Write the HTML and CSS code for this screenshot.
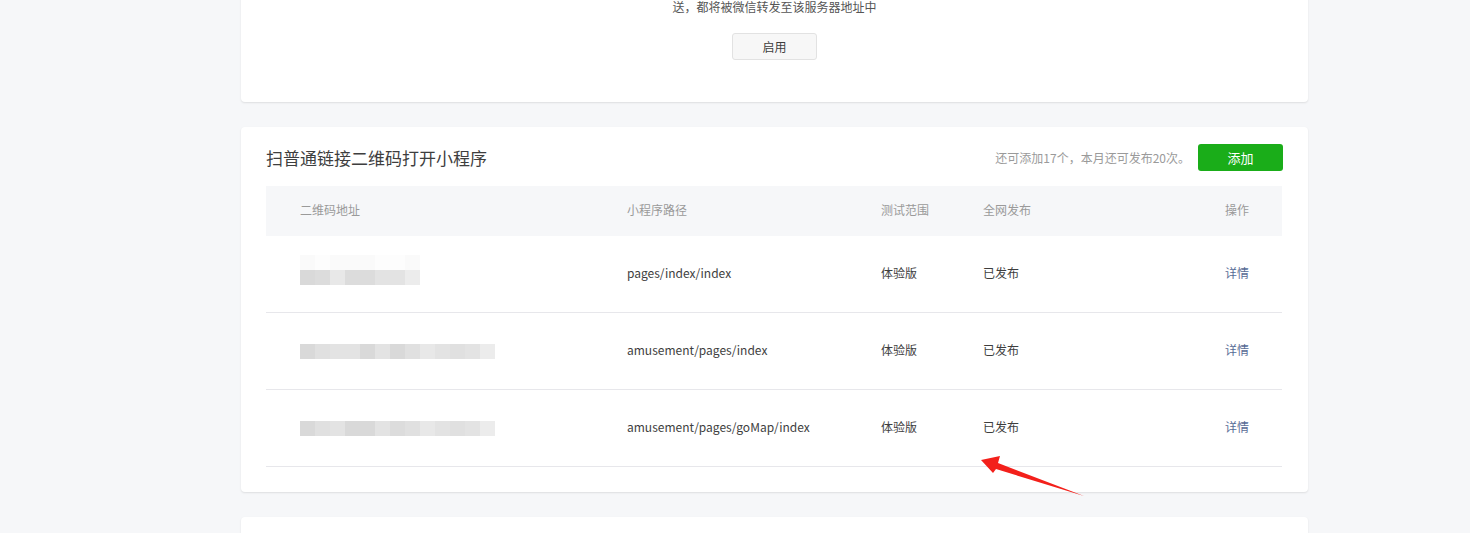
FILE: index.html
```html
<!DOCTYPE html>
<html lang="zh-CN">
<head>
  <meta charset="UTF-8">
  <title>扫普通链接二维码打开小程序</title>
  <link rel="stylesheet" href="styles.css">
</head>
<body>
  <div class="main">
    <div class="card card-top">
      <p class="tip">送，都将被微信转发至该服务器地址中</p>
      <button type="button" class="btn-default">启用</button>
    </div>

    <div class="card card-qr">
      <div class="card-hd">
        <h2>扫普通链接二维码打开小程序</h2>
        <div class="hd-extra">
          <span class="quota">还可添加17个，本月还可发布20次。</span>
          <button type="button" class="btn-primary">添加</button>
        </div>
      </div>

      <div class="qr-table">
        <div class="row head">
          <div>二维码地址</div>
          <div>小程序路径</div>
          <div>测试范围</div>
          <div>全网发布</div>
          <div>操作</div>
        </div>
        <div class="row">
          <div class="pic">
            <div class="mosaic faint"><i class="g9"></i><i class="g10"></i><i class="g9"></i><i class="g9"></i><i class="g9"></i><i class="g10"></i><i class="g10"></i><i class="g9"></i></div>
            <div class="mosaic"><i class="g1"></i><i class="g2"></i><i class="g5"></i><i class="g2"></i><i class="g2"></i><i class="g4"></i><i class="g4"></i><i class="g6"></i></div>
          </div>
          <div>pages/index/index</div>
          <div>体验版</div>
          <div>已发布</div>
          <div><a href="#" class="link">详情</a></div>
        </div>
        <div class="row">
          <div class="pic">
            <div class="mosaic"><i class="g1"></i><i class="g3"></i><i class="g4"></i><i class="g4"></i><i class="g1"></i><i class="g4"></i><i class="g1"></i><i class="g3"></i><i class="g5"></i><i class="g4"></i><i class="g3"></i><i class="g4"></i><i class="g6"></i></div>
          </div>
          <div>amusement/pages/index</div>
          <div>体验版</div>
          <div>已发布</div>
          <div><a href="#" class="link">详情</a></div>
        </div>
        <div class="row">
          <div class="pic">
            <div class="mosaic"><i class="g1"></i><i class="g3"></i><i class="g4"></i><i class="g1"></i><i class="g1"></i><i class="g4"></i><i class="g2"></i><i class="g3"></i><i class="g5"></i><i class="g4"></i><i class="g3"></i><i class="g4"></i><i class="g6"></i></div>
          </div>
          <div>amusement/pages/goMap/index</div>
          <div>体验版</div>
          <div>已发布</div>
          <div><a href="#" class="link">详情</a></div>
        </div>
      </div>

      <!-- 标注箭头 -->
      <svg class="arrow" width="106" height="44" viewBox="0 0 106 44">
        <polygon points="1,5 20,1 18,8 104,41 16,14 13,18" fill="#f3201b"/>
      </svg>
    </div>

    <div class="card card-next"></div>
  </div>
</body>
</html>
```

FILE: styles.css
```css
body {
  margin: 0;
  background: #f6f7f9;
  font-family: "Noto Sans CJK SC", "Liberation Sans", sans-serif;
  font-size: 12px;
  color: #3e3e3e;
  overflow: hidden;
}
.main {
  width: 1067px;
  margin: -23px 0 0 241px;
}
.card {
  background: #fff;
  border-radius: 4px;
  box-shadow: 0 1px 2px rgba(0, 0, 0, 0.1);
  margin-bottom: 25px;
}
.card-top {
  padding: 20px 0 42px;
  text-align: center;
}
.tip {
  margin: 0;
  line-height: 20px;
  color: #555;
}
.btn-default {
  margin-top: 16px;
  width: 85px;
  height: 27px;
  background: #f7f7f7;
  border: 1px solid #e2e2e2;
  border-radius: 3px;
  font-family: inherit;
  font-size: 12px;
  color: #3e3e3e;
  padding: 0;
}
.card-qr {
  position: relative;
  padding: 17px 25px 25px;
}
.card-hd {
  display: flex;
  align-items: center;
  justify-content: space-between;
  margin-bottom: 15px;
}
.card-hd h2 {
  margin: 0 0 1px;
  font-size: 17px;
  font-weight: normal;
  color: #3e3e3e;
}
.hd-extra {
  display: flex;
  align-items: center;
  gap: 8px;
}
.quota {
  color: #9a9a9a;
}
.btn-primary {
  width: 85px;
  height: 27px;
  background: #1aad19;
  border: none;
  border-radius: 3px;
  color: #fff;
  font-family: inherit;
  font-size: 13px;
  padding: 0;
}
.qr-table {
  width: 1016px;
}
.row {
  box-sizing: border-box;
  display: grid;
  grid-template-columns: 327px 254px 102px 1fr auto;
  align-items: center;
  height: 77px;
  padding: 0 33px 4px 34px;
  border-bottom: 1px solid #e7e7eb;
}
.row.head {
  height: 50px;
  background: #f6f7f9;
  border-bottom: none;
  color: #9a9a9a;
}
.pic {
  margin-top: 4px;
}
.mosaic {
  display: flex;
  height: 15px;
}
.mosaic i {
  width: 15px;
  height: 15px;
}
.mosaic.faint {
  margin-top: -9px;
}
.g1 { background: #d9d9d9; }
.g2 { background: #dcdcdc; }
.g3 { background: #e0e0e0; }
.g4 { background: #e3e3e3; }
.g5 { background: #e8e8e8; }
.g6 { background: #ececec; }
.g9 { background: #fafafa; }
.g10 { background: #fdfdfd; }
.link {
  color: #576b95;
  text-decoration: none;
}
.arrow {
  position: absolute;
  left: 739px;
  top: 328px;
}
.card-next {
  height: 60px;
}
```
